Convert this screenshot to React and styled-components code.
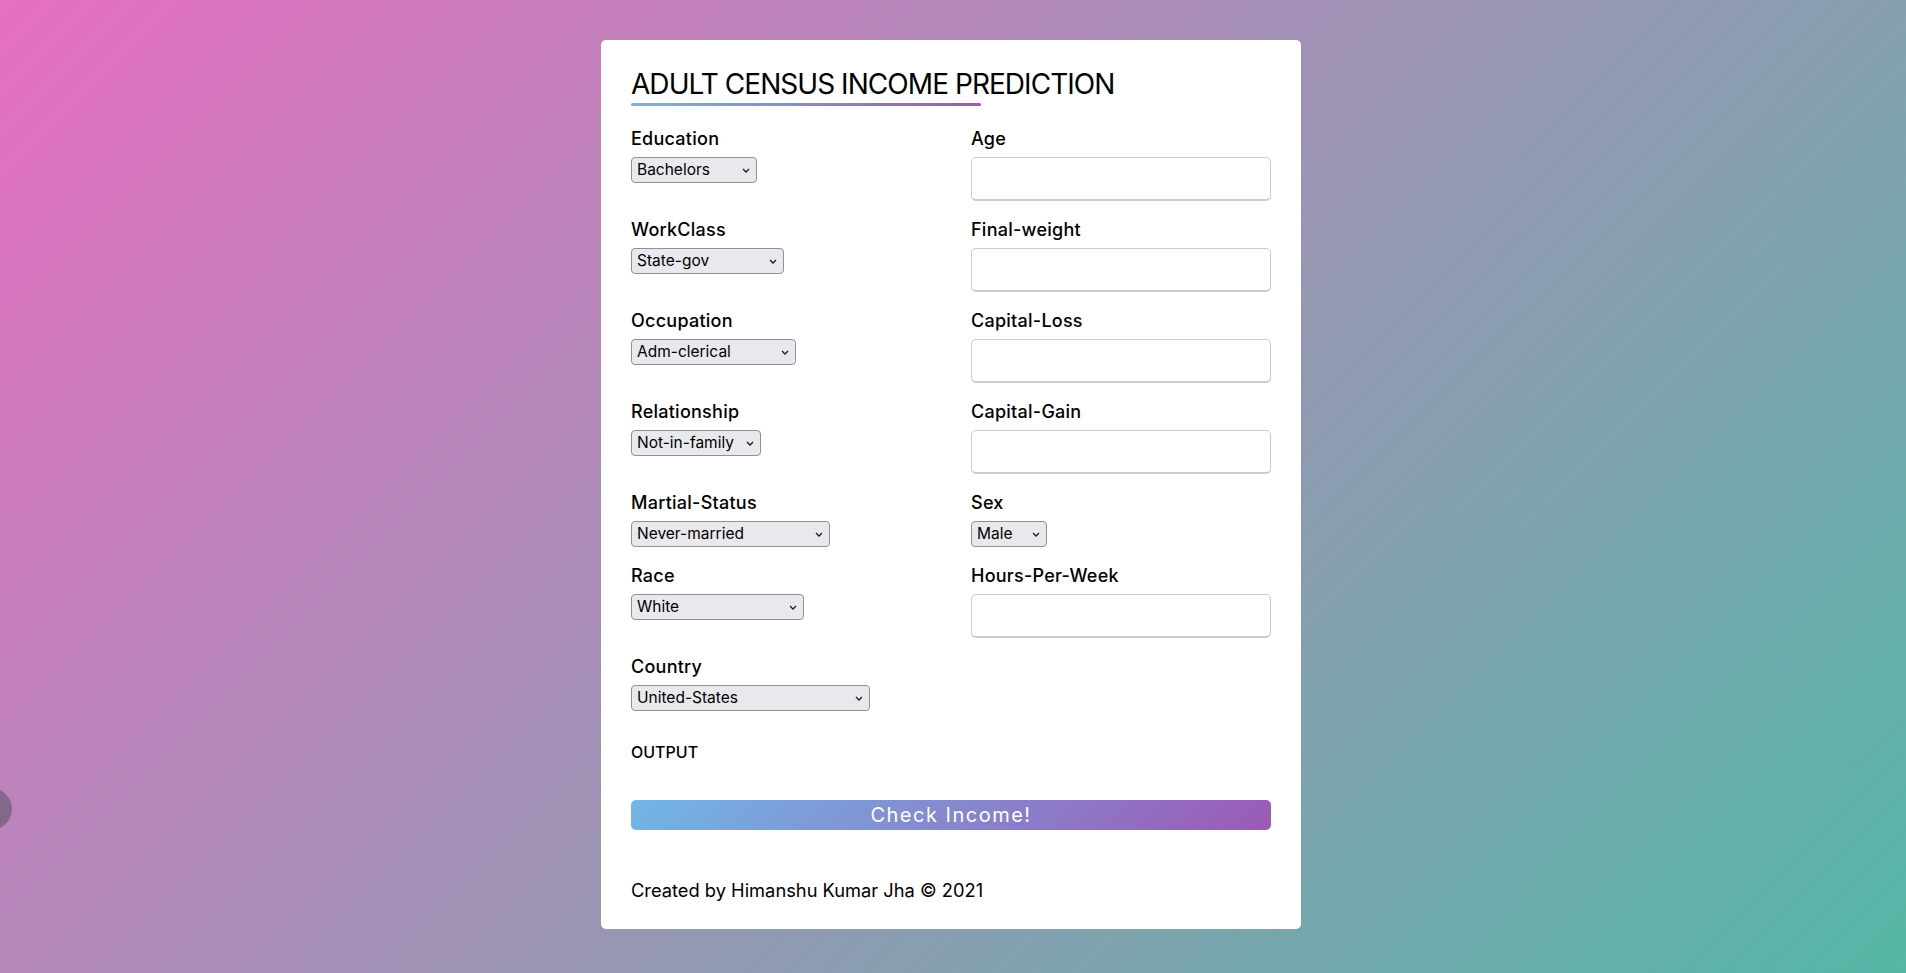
import React from "react";
import styled, { createGlobalStyle } from "styled-components";

const GlobalStyle = createGlobalStyle`
  * { box-sizing: border-box; margin: 0; padding: 0; }
  html, body { height: 100%; }
  body {
    font-family: Inter, "Noto Sans", sans-serif;
    background: linear-gradient(135deg, #e66fc3, #54b7a6);
    overflow: hidden;
  }
`;

const Page = styled.div`
  height: 100vh;
  display: flex;
  align-items: center;
  justify-content: center;
  padding-right: 4px;
  padding-bottom: 4px;
`;

const Card = styled.div`
  width: 700px;
  background: #fff;
  border-radius: 5px;
  padding: 25px 30px;
`;

const Title = styled.h1`
  font-size: 28px;
  font-weight: 400;
  line-height: 38px;
  color: #000;
  letter-spacing: -0.95px;
`;

const Underline = styled.div`
  width: 350px;
  height: 3px;
  border-radius: 5px;
  background: linear-gradient(135deg, #71b7e6, #9b59b6);
  margin-bottom: 20px;
`;

const Details = styled.div`
  display: flex;
  flex-wrap: wrap;
  justify-content: space-between;
`;

const Box = styled.div`
  width: calc(50% - 20px);
  margin-bottom: 16px;
`;

const Label = styled.span`
  display: block;
  font-size: 18px;
  font-weight: 500;
  letter-spacing: 0.25px;
  line-height: 26px;
  margin-bottom: 5px;
  color: #000;
`;

const TextInput = styled.input`
  display: block;
  width: 100%;
  height: 44px;
  border: 1px solid #ccc;
  border-bottom-width: 2px;
  border-radius: 5px;
  outline: none;
  padding-left: 15px;
  font-size: 16px;
  font-family: inherit;
  background: #fff;
`;

const SelectWrap = styled.div`
  position: relative;
  width: ${(p) => p.$w}px;
  height: 26px;
`;

const Select = styled.select`
  appearance: none;
  -webkit-appearance: none;
  width: 100%;
  height: 100%;
  background: #e9e9ed;
  border: 1px solid #8f8f9d;
  border-radius: 4px;
  font-family: inherit;
  font-size: 15.5px;
  color: #000;
  padding: 0 20px 0 5px;
  line-height: 24px;
`;

const Chevron = styled.svg`
  position: absolute;
  right: 7px;
  top: 11px;
  width: 8px;
  height: 5px;
  pointer-events: none;
`;

const Output = styled.div`
  font-size: 16px;
  font-weight: 500;
  line-height: 26px;
  margin-top: 12px;
  color: #000;
`;

const Button = styled.button`
  display: block;
  width: 100%;
  height: 30px;
  margin-top: 35px;
  border: none;
  border-radius: 5px;
  color: #fff;
  font-family: inherit;
  font-size: 20px;
  font-weight: 400;
  letter-spacing: 1.5px;
  background: linear-gradient(135deg, #71b7e6, #9b59b6);
`;

const Footer = styled.p`
  margin-top: 47px;
  font-size: 18.3px;
  line-height: 27px;
  color: #000;
`;

const Bubble = styled.div`
  position: fixed;
  left: -30px;
  top: 788px;
  width: 42px;
  height: 42px;
  border-radius: 50%;
  background: #82688b;
`;

function Dropdown({ width, value }) {
  return (
    <SelectWrap $w={width}>
      <Select defaultValue={value}>
        <option>{value}</option>
      </Select>
      <Chevron viewBox="0 0 8 5">
        <polyline points="1,1 4,4 7,1" fill="none" stroke="#1a1a1a" strokeWidth="1.3" />
      </Chevron>
    </SelectWrap>
  );
}

const fields = [
  { label: "Education", select: "Bachelors", w: 126 },
  { label: "Age" },
  { label: "WorkClass", select: "State-gov", w: 153 },
  { label: "Final-weight" },
  { label: "Occupation", select: "Adm-clerical", w: 165 },
  { label: "Capital-Loss" },
  { label: "Relationship", select: "Not-in-family", w: 130 },
  { label: "Capital-Gain" },
  { label: "Martial-Status", select: "Never-married", w: 199 },
  { label: "Sex", select: "Male", w: 76 },
  { label: "Race", select: "White", w: 173 },
  { label: "Hours-Per-Week" },
  { label: "Country", select: "United-States", w: 239 },
];

export default function App() {
  return (
    <>
      <GlobalStyle />
      <Page>
        <Card>
          <Title>ADULT CENSUS INCOME PREDICTION</Title>
          <Underline />
          <Details>
            {fields.map((f) => (
              <Box key={f.label}>
                <Label>{f.label}</Label>
                {f.select ? <Dropdown width={f.w} value={f.select} /> : <TextInput type="text" />}
              </Box>
            ))}
          </Details>
          <Output>OUTPUT</Output>
          <Button>Check Income!</Button>
          <Footer>Created by Himanshu Kumar Jha © 2021</Footer>
        </Card>
      </Page>
      <Bubble />
    </>
  );
}
